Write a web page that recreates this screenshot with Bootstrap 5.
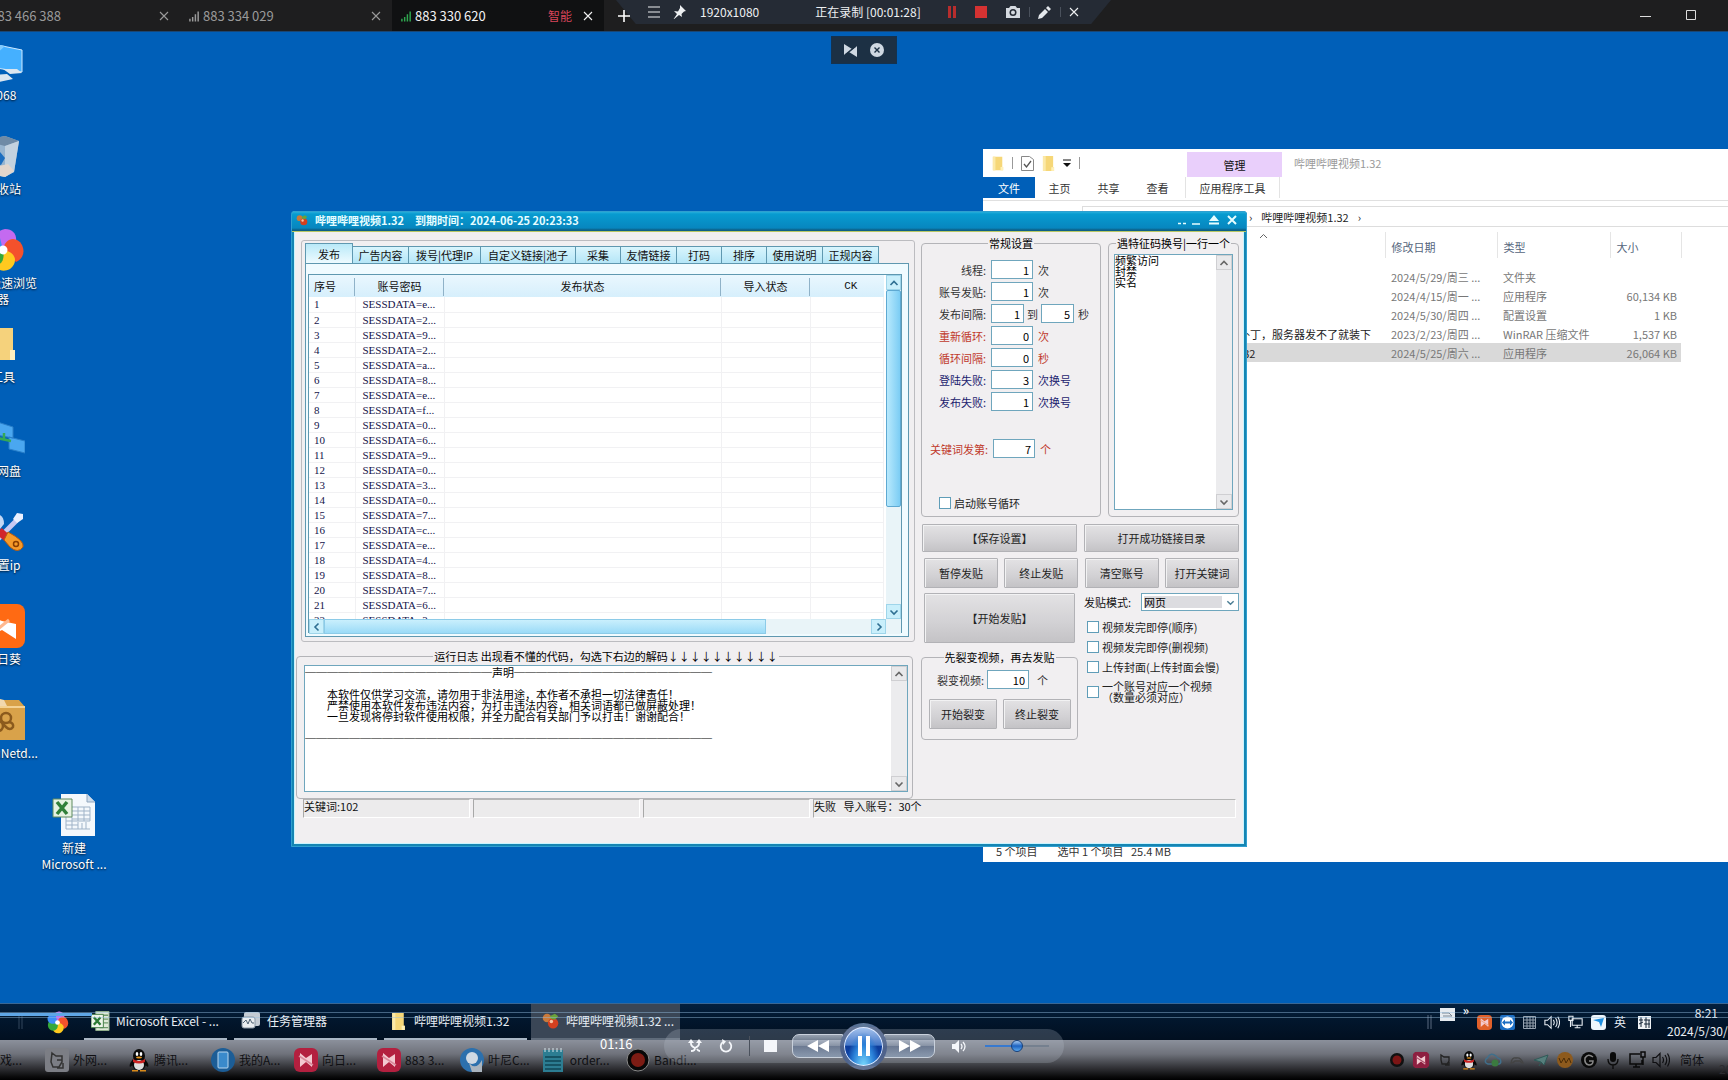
<!DOCTYPE html>
<html lang="zh-CN">
<head>
<meta charset="utf-8">
<meta name="viewport" content="width=device-width, initial-scale=1">
<title>远程桌面</title>
<link rel="stylesheet" href="https://cdn.jsdelivr.net/npm/bootstrap@5.3.0/dist/css/bootstrap.min.css">
<style>
:root{--ui:"Noto Sans CJK SC","Noto Sans",sans-serif;--line:#6fa6bd}
html,body{height:100%}
body{margin:0;background:#005fb8;font-family:var(--ui);font-size:11px;line-height:14px;color:#111;overflow:hidden}
svg{display:block;flex:none}
button,input,select,textarea{font-family:inherit;font-size:inherit}
.bare{background:none;border:0;padding:0;color:inherit;display:flex;align-items:center;justify-content:center}

/* remote session tabs */
.sessbar{height:32px;background:#1e1e1f;color:#9a9a9a;font-size:13px;flex:none;border-bottom:1px solid #1a4674}
.sess{width:212px;padding:0 11px 0 9px;gap:3px;white-space:nowrap}
.sess.first{width:180px;padding-left:0}
.sess.first .num{width:61px;direction:rtl;overflow:hidden;text-align:right}
.sess .num{flex:none}
.sess.on{background:#101112;color:#f2f2f2}
.smart{color:#d8455a;font-size:12px}
.recbar{left:616px;top:0;height:24px;width:495px;background:#252b35;clip-path:polygon(0 0,100% 0,96% 100%,4% 100%);color:#eef0f2;font-size:12px;padding:0 32px}
.recsep{width:1px;height:10px;background:#4a515c}
.minirec{left:831px;top:4px;width:66px;height:28px;background:#1c3044;border:1px solid #14324f;color:#cfd8e2}

/* desktop icons */
.dcol{left:-37px;top:8px;width:80px}
.dico{height:94px;text-align:center;color:#fff;font-size:12px;line-height:16px;text-shadow:0 1px 2px #012;white-space:nowrap}
.dico svg{height:44px;width:44px;margin:0 auto 3px}
.dico.solo{left:34px;top:761px;width:80px}

/* file explorer */
.explorer{left:983px;right:0;top:117px;height:713px;background:#fff;font-size:11px;overflow:hidden}
.qbar{height:28px;padding-left:9px}
.qsep{width:1px;height:12px;background:#999}
.mng{width:95px;height:25px;background:#e9cffb;margin-left:107px;margin-top:3px}
.etabs{height:24px;border-bottom:1px solid #e0e0e0}
.etabs a{color:#333;text-decoration:none;height:21px;display:flex;align-items:center;justify-content:center;width:49px}
.etabs a.file{background:#005fb8;color:#fff;width:52px}
.etabs a.tool{width:95px;margin-left:3px;border:1px solid #e3e3e3;border-width:0 1px}
.addr{height:21px;margin:5px 0 0 99px;border:1px solid #ddd;border-right:0;padding-left:166px;gap:9px;color:#222}
.flist{margin-top:5px;table-layout:fixed;width:698px;border-collapse:collapse;color:#777}
.flist th{font-weight:400;color:#54657c;height:26px;border-right:1px solid #e5e5e5;padding:4px 0 0 6px;vertical-align:middle}
.flist td{height:19px;padding:0 4px 0 6px;white-space:nowrap;overflow:hidden}
.flist tbody:before{content:"";display:block;height:9px}
.flist .nm{color:#222}
.flist .known{padding-left:185px}
.flist .pick td{background:#d9d9d9}

/* publishing tool window */
.tool-win{left:291px;top:179px;width:956px;background:#f1eff1;border:3px solid #1585b3;outline:1px solid #2f9fd0;outline-offset:-1px;border-top:0;border-radius:4px 4px 0 0;box-shadow:inset 0 0 0 1px #c8f4ff}
.tbar{height:21px;margin:0 -3px;padding:0 10px 2px 5px;background:linear-gradient(#37b7df 0,#079bd0 15%,#0786bf 85%,#0c5f86 95%);border-radius:4px 4px 0 0;border-bottom:1px solid #b8c765;color:#e6fdff;font-weight:700;gap:7px}
.client{padding:0 5px 0 2px}
.colL{padding-top:8px;min-width:0}
.colR{width:318px;padding-top:4px;flex:none}
.tabbox{margin:0 0 0 5px;height:402px;padding:3px 5px 4px 3px;border:1px solid #bcbcc0;border-radius:3px}
.ttabs{height:19px;align-items:flex-end}
.ttabs button{height:17px;border:1px solid #5f98b0;border-bottom:0;border-left:0;background:linear-gradient(#d9f5fd,#b5e6f7);padding:0;line-height:14px;color:#111;white-space:nowrap;border-radius:0}
.ttabs button.active{height:20px;width:48px;border-left:1px solid #5f98b0;background:linear-gradient(#b9e9f8,#eefbff)}
.w45{width:45px}.w56{width:56px}.w72{width:72px}.w96{width:95px}
.tpane{border:1px solid #5f98b0;background:#f0fbff;flex:1;padding:10px 6px 3px 2px;min-height:0}
.lview{border:1px solid #5f98b0;height:100%;display:grid;grid-template:1fr 15px/1fr 15px;background:#fff}
.lrows{overflow:hidden;min-height:0;height:344px}
.ltab{table-layout:fixed;width:575px;border-collapse:collapse}
.ltab th{height:22px;line-height:20px;background:linear-gradient(#eaf7fe,#d6effc);font-weight:400;text-align:center;padding:0;color:#111;position:relative;vertical-align:middle}
.ltab th:first-child{text-align:left;padding-left:5px}
.ltab th:not(:last-child):after{content:"";position:absolute;right:0;top:3px;bottom:1px;width:1px;background:#8fb2c8}
.ltab td{height:15px;line-height:14px;padding:0 0 0 7px;border:1px solid #f1f1f3;border-width:0 1px 1px 0;font-family:"Liberation Serif",serif;color:#14144a;white-space:nowrap}
.ltab td:first-child{padding-left:5px}
.ckh{font-family:"Liberation Mono",monospace;font-size:11px}
.vbar{background:#e9f4f8;display:flex;flex-direction:column}
.hbar{background:#e9f4f8;display:flex}
.arr{width:15px;height:15px;background:#c9effb;border:1px solid #9fd5ea;color:#2f6f92}
.vthumb{height:217px;background:linear-gradient(90deg,#b8e9fd,#7ccdf4);border:1px solid #5ea9d2;border-radius:2px}
.hthumb{width:442px;background:linear-gradient(#c9effd,#9bdbf7);border:1px solid #8ccbe8}
.fs{border:1px solid #b4b4b8;border-radius:4px;position:relative}
.fs>legend{float:none;width:auto;font-size:11px;line-height:14px;height:14px;margin:0 auto;padding:0 1px;color:#000;white-space:nowrap}
.logfs{height:150px;margin-top:7px;width:617px;padding:2px 4px 5px 7px}
.memo{border:1px solid var(--line);background:#fff;display:flex}
.memo textarea{border:0;resize:none;overflow:hidden;flex:1;min-width:0;background:#fff;padding:0;line-height:11px;font-size:11px;color:#000;outline:0;white-space:pre}
.logmemo{height:127px}.logmemo textarea{padding-top:1px}
.sbar{width:16px;background:#ececee;display:flex;flex-direction:column;justify-content:space-between}
.sbar .arr{background:#e9e9eb;border-color:#cfcfd2;color:#666;width:16px}
.opt{height:281px;width:180px}
.feat{height:281px;width:131px;padding:1px 5px 0 5px}
.feat .memo{height:256px;margin-top:3px}
.optrows{padding-top:10px;gap:3px}
.orow{height:19px;align-items:center;white-space:nowrap;color:#333}
.orow>label{width:64px;text-align:right;margin-right:5px}
.orow>label.kw{width:66px}
.orow>span{margin-left:5px}
.orow input{width:42px;height:19px;border:1px solid var(--line);background:#fff;text-align:right;padding:0 3px 0 0;color:#000;outline:0}
.orow input.sh{width:33px}
.orow>.to{margin:0 3px}
.tr-red,.orow.tr-red{color:#c0392b}
.tr-navy,.orow.tr-navy{color:#1c1c6e}
.tick{display:flex;align-items:center;gap:3px;line-height:11px;white-space:nowrap;color:#222}
.tick input{appearance:none;width:12px;height:12px;margin:0;border:1px solid #5f9db8;background:#fff;flex:none}
.tbtn{--bs-btn-font-size:11px;--bs-btn-line-height:14px;--bs-btn-padding-x:0;--bs-btn-padding-y:0;--bs-btn-border-radius:1px;--bs-btn-color:#222;background:linear-gradient(#e3e2e4,#d2d1d4 60%,#c4c3c6);border:1px solid #b2b2b6;box-shadow:inset 1px 1px #f2f2f3;white-space:nowrap}
.h28{height:28px}.h30{height:30px}.h50{height:50px}
.bw{width:74px}
.colA{width:157px}
.splitfs{height:90px;margin-top:7px}
.splitfs .orow{height:19px;margin-top:6px}
.splitfs .orow>label{width:62px;margin-right:3px}
.mode select{appearance:none;width:98px;height:18px;border:1px solid var(--line);background:#fff linear-gradient(#dcdce0,#dcdce0) 2px 2px/78px 12px no-repeat;padding:0 0 0 2px;line-height:14px;border-radius:0;color:#000}
.mode .chev{right:4px;top:5px;pointer-events:none;color:#4d7f95}
.stat{height:19px;margin:0 3px 26px 7px;gap:3px;color:#111;line-height:12px}
.stat>div{border:1px solid #fff;border-top-color:#b5b5b5;border-left-color:#a8a8a8;background:#ecebec;width:167px;white-space:pre}
.stat>div:last-child{flex:1;width:auto}

/* remote taskbar */
.rtask{height:37px;background:linear-gradient(#03203f,#02172e 40%,#010f20);border-top:1px solid #3a6794;color:#e9eef4;font-size:12px;flex:none}
.task{width:143px;margin-right:7px;gap:6px;padding-left:7px;border-bottom:2px solid #a9b6c4;white-space:nowrap;height:100%}
.task.on{width:149px;margin:0 0 0 -3px;background:#3a4656;border-bottom-color:#5f6b7a;padding-left:10px;gap:6px}
.rtray{gap:8px}
.clock{width:61px;line-height:18px;font-size:12px;white-space:nowrap}
.clock span{padding-right:10px}
/* local taskbar */
.ltask{height:40px;background:linear-gradient(#8b909b 0,#6f727b 35%,#393a3f 65%,#0a0a0b 92%,#000);color:#0f0f12;font-size:12px;flex:none;overflow:hidden}
.lt{width:83px;gap:4px;white-space:nowrap;flex:none}
.ltray{gap:6px}
.ltray svg{width:18px;height:20px}

/* player overlay */
.seek{left:0;right:0;bottom:62px;height:6px;border:1px solid rgba(150,190,225,.45);border-width:1px 0;pointer-events:none}
.seek i{display:block;width:92px;height:3px;background:#5fa6e6}
.ptime{left:600px;bottom:27px;color:#fff;font-size:13px;line-height:18px}
.player{left:664px;bottom:17px;width:400px;height:34px;border-radius:17px;background:rgba(190,195,210,.24);color:#f4f6fa}
.player .skip{width:51px;height:24px;background:linear-gradient(rgba(220,228,240,.6),rgba(130,150,180,.4) 48%,rgba(80,100,135,.55) 50%,rgba(150,175,205,.55));border:1px solid #c9d1dc;color:#fff}
.player .rew{border-radius:7px 0 0 7px;margin-left:15px}
.player .fwd{border-radius:0 7px 7px 0}
.player .play{width:47px;height:47px;border-radius:50%;border:4px solid rgba(90,105,135,.85);background:radial-gradient(ellipse at 50% 105%,#7fe0ff 0,#2a80d8 40%,transparent 62%),linear-gradient(#a9c6ef 0,#4678c8 46%,#0d3c9b 50%,#0f4cb0);box-shadow:inset 0 0 0 1px #dfeaff;margin:0 -3px;z-index:1;color:#fff;flex:none}
.vol{appearance:none;width:64px;height:14px;background:linear-gradient(90deg,#3779cf 50%,#75808f 50%) center/100% 2px no-repeat;margin:0 0 0 18px}
.vol::-webkit-slider-thumb{appearance:none;width:12px;height:12px;border-radius:50%;background:linear-gradient(#a9cdf4,#1c62c0 50%,#5aa8ee);border:1px solid #16407c}
</style>
</head>
<body class="d-flex flex-column vh-100">

<svg width="0" height="0" class="position-absolute" aria-hidden="true">
<defs>
<symbol id="x" viewBox="0 0 10 10"><path d="M1 1l8 8M9 1l-8 8" stroke="currentColor" stroke-width="1.1" fill="none"/></symbol>
<symbol id="sig" viewBox="0 0 12 12"><path d="M1 9v3M4 7v5M7 4v8M10 1v11" stroke="currentColor" stroke-width="1.6" fill="none"/></symbol>
<symbol id="up" viewBox="0 0 10 10"><path d="M1.500 7L5 3.500 8.500 7" fill="none" stroke="currentColor" stroke-width="1.600"/></symbol>
<symbol id="dn" viewBox="0 0 10 10"><path d="M1.500 3.500L5 7l3.500-3.500" fill="none" stroke="currentColor" stroke-width="1.600"/></symbol>
<symbol id="lf" viewBox="0 0 10 10"><path d="M6.500 1.500L3 5l3.500 3.500" fill="none" stroke="currentColor" stroke-width="1.600"/></symbol>
<symbol id="rt" viewBox="0 0 10 10"><path d="M3.500 1.500L7 5 3.500 8.500" fill="none" stroke="currentColor" stroke-width="1.600"/></symbol>
<symbol id="folder" viewBox="0 0 14 18"><path d="M1 1h11v12h1v4H1z" fill="#f6d778"/><path d="M1 1h3v16H1z" fill="#fbe9a8"/><path d="M10 13h3v4h-3z" fill="#fff1b8"/></symbol>
<symbol id="flower" viewBox="0 0 44 44"><path d="M22 22C10 16 12 3 24 1c8 0 12 6 11 12z" fill="#c46af0"/><path d="M22 22c2-13 14-14 19-5 4 9-1 15-6 17z" fill="#f4512c"/><path d="M22 22c14 2 15 13 7 19-8 4-14 0-16-5z" fill="#ffc91f"/><path d="M22 22c3 12-5 19-14 14-6-5-5-12-2-16z" fill="#35a93a"/><path d="M22 22C12 28 2 23 3 13 6 6 13 5 18 6z" fill="#3d8df5"/><circle cx="22" cy="22" r="4.500" fill="#fff"/></symbol>
<symbol id="sun" viewBox="0 0 24 24"><rect width="24" height="24" rx="6" fill="var(--c,#b3203f)"/><path d="M6 5l6 5 6-4v13l-6-5-6 5z" fill="#f3c9d0"/><path d="M5 8l14 9" stroke="var(--s,#d98a9b)" stroke-width="1.500"/></symbol>
<symbol id="penguin" viewBox="0 0 22 24"><ellipse cx="11" cy="8" rx="6" ry="7" fill="#0a0a0a"/><path d="M5 11c-3 4-4 6-3 8l3-2zM17 11c3 4 4 6 3 8l-3-2z" fill="#0a0a0a"/><ellipse cx="11" cy="16" rx="7" ry="6.500" fill="#0a0a0a"/><ellipse cx="11" cy="17" rx="5" ry="5" fill="#ddd"/><path d="M5 11q6 4 12 0v3q-6 3-12 0z" fill="#c22"/><ellipse cx="9" cy="6" rx="1.300" ry="2" fill="#fff"/><ellipse cx="13" cy="6" rx="1.300" ry="2" fill="#fff"/><ellipse cx="11" cy="9.500" rx="3" ry="1" fill="#e9961c"/><path d="M4 22h6v1.500H4zM12 22h6v1.500h-6z" fill="#d98a1a"/></symbol>
<symbol id="spk" viewBox="0 0 18 16"><path d="M1 5.500h3l4-4v13l-4-4H1z" fill="none" stroke="currentColor" stroke-width="1.200"/><path d="M10.500 5q2 3 0 6M13 3q3.500 5 0 10M15.500 1.500q4 6.500 0 13" fill="none" stroke="currentColor" stroke-width="1.200"/></symbol>
<symbol id="net" viewBox="0 0 18 16"><path d="M5 4h12v8H5zM8 15h7M11 12v3M1 1h5v5H1zM3 6v8" fill="none" stroke="currentColor" stroke-width="1.300"/></symbol>
<symbol id="berry" viewBox="0 0 20 22"><circle cx="6" cy="7" r="5" fill="#c9793a"/><circle cx="13" cy="13" r="6" fill="#d4401f"/><path d="M9 5l6-3 4 3-4 4-4-1z" fill="#6ba23a"/><circle cx="11" cy="11" r="2" fill="#f6c3a3"/></symbol>
<symbol id="xls" viewBox="0 0 44 44"><path d="M9 1h26l8 8v34H9z" fill="#f4f8fc"/><path d="M35 1v8h8" fill="#cddbea" stroke="#8fa5bd"/><path d="M14 28h24M14 32h12M14 36h24M20 14h18M20 18h18M20 22h18M20 26h18M26 14v14M32 14v14M38 14v14M14 24v12M20 24v12M26 29v7M30 30v6M34 29v7" stroke="#9fb3c8" fill="none"/><path d="M1 6h19v18H1z" fill="#e6f2e2" stroke="#5e8a5e"/><path d="M5 9l10 12M15 9L5 21" stroke="#31803a" stroke-width="3.500"/></symbol>
<symbol id="xl" viewBox="0 0 20 20"><path d="M5 0h14v20H5z" fill="#dfe9d8" stroke="#8fae8a"/><path d="M13 4h5M13 8h5M13 12h5M9 17h9" stroke="#6d9a6b" stroke-width="1.500"/><path d="M0 3h13v14H0z" fill="#eef5ea" stroke="#3e7a42"/><path d="M3 6l7 8M10 6l-7 8" stroke="#2c7a35" stroke-width="2.500"/></symbol>
</defs>
</svg>

<header class="sessbar d-flex position-relative">
  <div class="sess first d-flex align-items-center"><span class="num"><bdi>883 466 388</bdi></span><button class="bare ms-auto" aria-label="关闭"><svg width="10" height="10"><use href="#x"/></svg></button></div>
  <div class="sess d-flex align-items-center"><svg width="11" height="12"><use href="#sig"/></svg><span class="num">883 334 029</span><button class="bare ms-auto" aria-label="关闭"><svg width="10" height="10"><use href="#x"/></svg></button></div>
  <div class="sess on d-flex align-items-center"><svg width="11" height="12" color="#2fa84f"><use href="#sig"/></svg><span class="num">883 330 620</span><span class="smart ms-auto me-2">智能</span><button class="bare" aria-label="关闭"><svg width="10" height="10"><use href="#x"/></svg></button></div>
  <button class="bare position-relative z-1 text-white" style="padding-left:14px" aria-label="新建"><svg width="12" height="12"><path d="M6 0v12M0 6h12" stroke="currentColor" stroke-width="1.600"/></svg></button>
  <div class="recbar position-absolute d-flex align-items-center">
    <svg width="12" height="12"><path d="M0 1h12M0 6h12M0 11h12" stroke="currentColor"/></svg>
    <svg width="14" height="14" style="margin:0 10px 0 12px"><path d="M8 0l6 6-2 .500-2.500 2.500.500 3-3-2-6 5 4-6-3-3 4 .500L8 3z" fill="currentColor"/></svg>
    <span class="ms-1">1920x1080</span>
    <span class="ms-5 ps-2">正在录制 [00:01:28]</span>
    <div class="d-flex align-items-center ms-auto gap-2">
      <svg width="10" height="12"><path d="M1 0h3v12H1zM6 0h3v12H6z" fill="#b72d2d"/></svg>
      <svg width="12" height="12" style="margin:0 10px"><path d="M0 0h12v12H0z" fill="#d53232"/></svg>
      <svg width="16" height="14"><path d="M1 3h3l1.500-2h5L12 3h3v10H1z" fill="#d5dae0"/><circle cx="8" cy="7.500" r="3.500" fill="#252b35"/><circle cx="8" cy="7.500" r="2" fill="#d5dae0"/></svg>
      <i class="recsep ms-n1"></i>
      <svg width="14" height="13"><path d="M0 13l1-4 6-6 3 3-6 6zM8 2l2-2 3 3-2 2z" fill="#e4e8ec"/></svg>
      <i class="recsep"></i>
      <button class="bare" aria-label="关闭录制"><svg width="10" height="10"><use href="#x"/></svg></button>
    </div>
  </div>
  <div class="d-flex align-items-center ms-auto text-white" style="gap:35px;padding-right:31px">
    <button class="bare" aria-label="最小化"><svg width="11" height="11"><path d="M0 6.500h11" stroke="#ddd"/></svg></button>
    <button class="bare" aria-label="最大化"><svg width="11" height="11"><path d="M.5.5h9v9h-9z" stroke="#ddd" fill="none"/></svg></button>
  </div>
</header>

<main class="flex-grow-1 position-relative overflow-hidden">
  <div class="minirec position-absolute d-flex align-items-center justify-content-center" style="gap:13px">
    <svg width="13" height="13"><path d="M0 0l8 5-8 6zM13 2v11L5 8z" fill="currentColor"/><path d="M1 11l11-9" stroke="#1c3044" stroke-width="1.500"/></svg>
    <svg width="14" height="14"><circle cx="7" cy="7" r="7" fill="currentColor"/><path d="M4.500 4.500l5 5M9.500 4.500l-5 5" stroke="#1c3044" stroke-width="1.400"/></svg>
  </div>

  <div class="dcol position-absolute">
    <div class="dico"><svg viewBox="0 0 44 44"><path d="M2 2l39 8v22L2 26z" fill="#45b0ff" stroke="#cfeaff"/><path d="M2 2l22 4L2 26z" fill="#7fcbff"/><path d="M22 29l14 0 5 4-12 1zM14 35l12-1 6 5-14 3z" fill="#dbe6f0"/></svg>1068</div>
    <div class="dico"><svg viewBox="0 0 44 44"><path d="M2 6l22-4 14 5-5 31-10 5-20-5z" fill="#a9bfd2" opacity=".9"/><path d="M2 6l22 6 14-5-14-5z" fill="#6f8ba6"/><path d="M24 12l14-5-5 31-9 5z" fill="#c3d2df"/><path d="M8 34l19-4 6 7-9 6-18-4z" fill="#e3d6cc"/><path d="M12 22l7-4 5 6-4 7-8-2z" fill="#1d6fc0"/></svg>回收站</div>
    <div class="dico"><svg><use href="#flower"/></svg>360极速浏览<br>器</div>
    <div class="dico"><svg viewBox="0 0 44 44"><path d="M6 6h26v22h2v10H6z" fill="#f5d27c"/><path d="M6 6h12v32H6z" fill="#fce4a4"/><path d="M29 28h5v10h-5z" fill="#fff0c0"/></svg>工具</div>
    <div class="dico"><svg viewBox="0 0 44 44"><path d="M10 4l22 7v11L10 18zM28 21l16 4v12l-16-4zM0 24l12 3v12L0 35z" fill="#4aa7f0" stroke="#2a7fc8"/><path d="M23 17v7M16 22l14 3" stroke="#35a856" stroke-width="2.500"/></svg>联网盘</div>
    <div class="dico"><svg viewBox="0 0 44 44"><path d="M14 4q9 0 9 10l-4 5-12-4z" fill="#c3d7f4"/><path d="M38 8L14 32" stroke="#c8c9f2" stroke-width="5"/><path d="M36 3l6 1v5l-6 4-4-4z" fill="#eaf0ff"/><path d="M18 21l8 7" stroke="#d2242b" stroke-width="8"/><path d="M27 22q17 9 15 15-5 7-13 0l-6-7z" fill="#f59a2a" stroke="#b45a10"/><circle cx="35" cy="34" r="2.500" fill="none" stroke="#8a3d00" stroke-width="1.500"/></svg>设置ip</div>
    <div class="dico"><svg viewBox="0 0 44 44"><rect width="44" height="44" rx="8" fill="#ff6a13"/><path d="M7 12l14 5 14 3v15l-14-9-14 7z" fill="#fff"/><path d="M7 33l21-17" stroke="#ffb88f" stroke-width="3"/></svg>向日葵</div>
    <div class="dico"><svg viewBox="0 0 44 44"><path d="M2 9L8 2h30l6 7v33H2z" fill="#d9a24a"/><path d="M2 9h42" stroke="#f4d294" stroke-width="2"/><path d="M15 0l8 2 3 6H14z" fill="#f2d8ae"/><circle cx="25" cy="20" r="5" fill="none" stroke="#8b5a1d" stroke-width="2.500"/><circle cx="17" cy="28" r="5" fill="none" stroke="#8b5a1d" stroke-width="2.500"/><path d="M28 24q5 1 4 5-3 4-7 0l-3-3" fill="none" stroke="#8b5a1d" stroke-width="2.500"/></svg>BaiduNetd...</div>
  </div>
  <div class="dico solo position-absolute"><svg><use href="#xls"/></svg>新建<br>Microsoft ...</div>

  <section class="explorer position-absolute">
    <div class="qbar d-flex align-items-center">
      <svg width="12" height="17"><use href="#folder"/></svg><i class="qsep ms-2 me-2"></i>
      <svg width="13" height="15" class="me-2"><path d="M.5.5h8l4 3v11h-12z" fill="#fff" stroke="#888"/><path d="M3 8l2.500 3L10 5" fill="none" stroke="#555" stroke-width="1.300"/></svg>
      <svg width="13" height="17" class="me-2"><use href="#folder"/></svg>
      <svg width="8" height="8" class="me-2"><path d="M0 1h8" stroke="#111"/><path d="M0 4h8L4 8z" fill="#111"/></svg><i class="qsep"></i>
      <div class="mng d-flex align-items-center justify-content-center">管理</div>
      <span class="ms-2 ps-1" style="color:#999">哔哩哔哩视频1.32</span>
    </div>
    <nav class="etabs d-flex"><a href="#" class="file">文件</a><a href="#">主页</a><a href="#">共享</a><a href="#">查看</a><a href="#" class="tool flex-shrink-0">应用程序工具</a></nav>
    <div class="addr d-flex align-items-center"><span>›</span><span>哔哩哔哩视频1.32</span><span>›</span></div>
    <table class="flist">
      <colgroup><col style="width:402px"><col style="width:112px"><col style="width:113px"><col style="width:71px"></colgroup>
      <thead><tr><th aria-label="名称" class="align-top pt-0"><svg width="9" height="9" style="margin-left:270px"><path d="M1 6l3.500-3.500L8 6" fill="none" stroke="#666"/></svg></th><th>修改日期</th><th>类型</th><th>大小</th></tr></thead>
      <tbody>
        <tr><td></td><td>2024/5/29/周三 ...</td><td>文件夹</td><td></td></tr>
        <tr><td></td><td>2024/4/15/周一 ...</td><td>应用程序</td><td class="text-end">60,134 KB</td></tr>
        <tr><td></td><td>2024/5/30/周四 ...</td><td>配置设置</td><td class="text-end">1 KB</td></tr>
        <tr><td class="nm text-end" style="padding-right:14px">补丁，服务器发不了就装下</td><td>2023/2/23/周四 ...</td><td>WinRAR 压缩文件</td><td class="text-end">1,537 KB</td></tr>
        <tr class="pick"><td class="nm known">哔哩哔哩视频1.32</td><td>2024/5/25/周六 ...</td><td>应用程序</td><td class="text-end">26,064 KB</td></tr>
      </tbody>
    </table>
    <div class="position-absolute bottom-0 start-0 d-flex pb-1" style="padding-left:13px;gap:20px;color:#333"><span>5 个项目</span><span>选中 1 个项目&nbsp;&nbsp; 25.4 MB</span></div>
  </section>

  <section class="tool-win position-absolute">
    <div class="tbar d-flex align-items-center">
      <svg width="12" height="13"><use href="#berry"/></svg>
      <span>哔哩哔哩视频1.32</span><span class="ms-1">到期时间：2024-06-25 20:23:33</span>
      <span class="ms-auto d-flex gap-1 align-items-center">
        <button class="bare" aria-label="托盘"><svg width="10" height="10"><path d="M1 8.500h3M6 8.500h3" stroke="currentColor" stroke-width="1.500"/></svg></button>
        <button class="bare" aria-label="最小化"><svg width="10" height="10"><path d="M1 9h8" stroke="currentColor" stroke-width="1.500"/></svg></button>
        <button class="bare ms-1" aria-label="还原"><svg width="10" height="10"><path d="M5 0l5 6H0zM0 7.500h10V9.500H0z" fill="currentColor"/></svg></button>
        <button class="bare ms-1" aria-label="关闭"><svg width="10" height="10" stroke-width="2"><path d="M1 1l8 8M9 1l-8 8" stroke="currentColor"/></svg></button>
      </span>
    </div>
    <div class="client">
      <div class="d-flex" style="gap:6px">
        <div class="colL flex-grow-1">
          <div class="tabbox d-flex flex-column">
            <div class="ttabs d-flex" role="tablist"><button class="active">发布</button><button class="w56">广告内容</button><button class="w72">拨号|代理IP</button><button class="w96">自定义链接|池子</button><button class="w45">采集</button><button class="w56">友情链接</button><button class="w45">打码</button><button class="w45">排序</button><button class="w56">使用说明</button><button class="w56">正规内容</button></div>
            <div class="tpane"><div class="lview">
              <div class="lrows"><table class="ltab"><colgroup><col style="width:46px"><col style="width:89px"><col style="width:277px"><col style="width:89px"><col></colgroup>
                <thead><tr><th>序号</th><th>账号密码</th><th>发布状态</th><th>导入状态</th><th class="ckh ps-2">CK</th></tr></thead><tbody id="accs"></tbody></table></div>
              <div class="vbar"><button class="bare arr"><svg width="10" height="10"><use href="#up"/></svg></button><div class="vthumb"></div><button class="bare arr mt-auto"><svg width="10" height="10"><use href="#dn"/></svg></button></div>
              <div class="hbar"><button class="bare arr"><svg width="10" height="10"><use href="#lf"/></svg></button><div class="hthumb"></div><button class="bare arr ms-auto"><svg width="10" height="10"><use href="#rt"/></svg></button></div>
              <div class="hbar"></div>
            </div></div>
          </div>
          <fieldset class="fs logfs"><legend>运行日志 出现看不懂的代码，勾选下右边的解码↓↓↓↓↓↓↓↓↓↓</legend>
            <div class="memo logmemo"><textarea aria-label="运行日志" readonly>─────────────────声明──────────────────

　　本软件仅供学习交流，请勿用于非法用途，本作者不承担一切法律责任！
　　严禁使用本软件发布违法内容，为打击违法内容，相关词语都已做屏蔽处理！
　　一旦发现将停封软件使用权限，并全力配合有关部门予以打击！谢谢配合！

─────────────────────────────────────</textarea>
            <div class="sbar"><button class="bare arr"><svg width="10" height="10"><use href="#up"/></svg></button><button class="bare arr"><svg width="10" height="10"><use href="#dn"/></svg></button></div></div>
          </fieldset>
        </div>
        <div class="colR">
          <div class="d-flex justify-content-between">
            <fieldset class="fs opt"><legend>常规设置</legend>
              <div class="optrows d-flex flex-column">
                <div class="orow d-flex"><label for="a1">线程:</label><input id="a1" value="1"><span>次</span></div>
                <div class="orow d-flex"><label for="a2">账号发贴:</label><input id="a2" value="1"><span>次</span></div>
                <div class="orow d-flex"><label for="a3">发布间隔:</label><input class="sh" id="a3" value="1"><label class="to w-auto" for="a4">到</label><input class="sh" id="a4" value="5"><span class="ms-1">秒</span></div>
                <div class="orow d-flex tr-red"><label for="a5">重新循环:</label><input id="a5" value="0"><span>次</span></div>
                <div class="orow d-flex tr-red"><label for="a6">循环间隔:</label><input id="a6" value="0"><span>秒</span></div>
                <div class="orow d-flex tr-navy"><label for="a7">登陆失败:</label><input id="a7" value="3"><span>次换号</span></div>
                <div class="orow d-flex tr-navy"><label for="a8">发布失败:</label><input id="a8" value="1"><span>次换号</span></div>
              </div>
              <div class="orow d-flex tr-red" style="margin-top:28px"><label class="kw" for="a9">关键词发第:</label><input id="a9" value="7"><span>个</span></div>
              <label class="tick" style="margin:39px 0 0 17px"><input type="checkbox">启动账号循环</label>
            </fieldset>
            <fieldset class="fs feat"><legend>遇特征码换号|一行一个</legend>
              <div class="memo"><textarea aria-label="遇特征码换号">频繁访问
封禁
实名</textarea><div class="sbar"><button class="bare arr"><svg width="10" height="10"><use href="#up"/></svg></button><button class="bare arr"><svg width="10" height="10"><use href="#dn"/></svg></button></div></div>
            </fieldset>
          </div>
          <div class="d-flex justify-content-between" style="margin:7px 0 6px 1px"><button class="btn tbtn h28" style="width:155px">【保存设置】</button><button class="btn tbtn h28" style="width:155px">打开成功链接目录</button></div>
          <div class="d-flex justify-content-between h30" style="margin-left:3px"><button class="btn tbtn bw">暂停发贴</button><button class="btn tbtn bw">终止发贴</button><button class="btn tbtn bw">清空账号</button><button class="btn tbtn bw">打开关键词</button></div>
          <div class="d-flex" style="margin-top:5px;gap:6px">
            <div class="colA">
              <button class="btn tbtn h50 d-block" style="width:151px;margin-left:3px">【开始发贴】</button>
              <fieldset class="fs splitfs"><legend>先裂变视频，再去发贴</legend>
                <div class="orow d-flex"><label for="b1">裂变视频:</label><input id="b1" value="10"><span class="ms-2">个</span></div>
                <div class="d-flex h30" style="gap:6px;padding-left:7px;margin-top:10px"><button class="btn tbtn" style="width:68px">开始裂变</button><button class="btn tbtn" style="width:68px">终止裂变</button></div>
              </fieldset>
            </div>
            <div class="flex-grow-1">
              <div class="mode d-flex align-items-center justify-content-between position-relative"><label for="md">发贴模式:</label><select id="md"><option>网页</option></select><svg class="chev position-absolute" width="9" height="9"><use href="#dn"/></svg></div>
              <div class="d-flex flex-column" style="gap:8px;padding:10px 0 0 3px">
                <label class="tick"><input type="checkbox">视频发完即停(顺序)</label>
                <label class="tick"><input type="checkbox">视频发完即停(删视频)</label>
                <label class="tick"><input type="checkbox">上传封面(上传封面会慢)</label>
                <label class="tick"><input type="checkbox"><span>一个账号对应一个视频<br>（数量必须对应）</span></label>
              </div>
            </div>
          </div>
        </div>
      </div>
      <div class="stat d-flex"><div>关键词:102</div><div></div><div></div><div>失败   导入账号：30个</div></div>
    </div>
  </section>
</main>

<footer class="rtask d-flex align-items-center">
  <svg width="6" height="14" style="margin-left:18px"><path d="M1 0v14M4 0v14" stroke="#33465c"/></svg>
  <svg width="23" height="23" style="margin:0 15px 0 22px"><use href="#flower"/></svg>
  <div class="task d-flex align-items-center"><svg width="19" height="20"><use href="#xl"/></svg>Microsoft Excel - ...</div>
  <div class="task d-flex align-items-center"><svg width="20" height="20"><rect x="3" y="1" width="16" height="14" rx="2" fill="#c4ccd4"/><rect x="1" y="6" width="13" height="11" rx="2" fill="#e9edf0" stroke="#8896a3"/><path d="M2 12l3-3 2 4 2-5 2 4h2" stroke="#4d6172" fill="none"/></svg>任务管理器</div>
  <div class="task d-flex align-items-center" style="gap:8px"><svg width="15" height="19"><use href="#folder"/></svg>哔哩哔哩视频1.32</div>
  <div class="task on d-flex align-items-center"><svg width="19" height="19"><use href="#berry"/></svg>哔哩哔哩视频1.32 ...</div>
  <div class="rtray d-flex align-items-center ms-auto">
    <svg width="5" height="14"><path d="M1 0v14M4 0v14" stroke="#5a6b80"/></svg>
    <svg width="15" height="13" class="mb-3"><rect width="15" height="13" fill="#e6ebf0"/><path d="M2 5h7l3 3M3 8h9" stroke="#7b8794" fill="none"/></svg>
    <span class="mb-4 text-white fw-bold">»</span>
    <svg width="15" height="15" style="--c:#e0602a;--s:#f0a080"><use href="#sun"/></svg>
    <svg width="15" height="15"><rect width="15" height="15" rx="2" fill="#1d6fc4"/><circle cx="7.500" cy="7.500" r="6" fill="#fff"/><path d="M2 7.500l3-3v2h5v-2l3 3-3 3v-2H5v2z" fill="#1d6fc4"/></svg>
    <svg width="13" height="13"><path d="M.5.5h12v12H.5zM4 1v11M7 1v11M10 1v11M1 4h11M1 7h11M1 10h11" stroke="#97a3b0" fill="none"/></svg>
    <svg width="16" height="15"><use href="#spk"/></svg>
    <svg width="15" height="14"><use href="#net"/></svg>
    <svg width="15" height="15"><rect width="15" height="15" rx="3" fill="#eef6fc"/><path d="M2 5l11-2-3 9-2-5z" fill="#1f8fe0"/></svg>
    <span>英</span>
    <svg width="13" height="13" class="ms-1 me-2"><rect width="13" height="13" fill="#eef1f4"/><path d="M1 4h4M3 1v10M1 8l4-2M6 4h6M6 8h6M8 1v11M11 4v8" stroke="#142436" fill="none"/></svg>
    <div class="clock"><span class="d-block text-end">8:21</span>2024/5/30/</div>
  </div>
</footer>

<div class="ltask d-flex align-items-center">
  <span style="width:45px;white-space:nowrap">戏...</span>
  <div class="lt d-flex align-items-center"><svg width="24" height="24"><rect width="24" height="24" rx="3" fill="#7c7e85"/><path d="M7 5l4 3h6v6l-3 5H8l-2-5zM12 12h5M18 15v5h-6" fill="none" stroke="#333" stroke-width="1.500"/></svg>外网...</div>
  <div class="lt d-flex align-items-center"><svg width="22" height="24"><use href="#penguin"/></svg>腾讯...</div>
  <div class="lt d-flex align-items-center"><svg width="24" height="24"><circle cx="12" cy="12" r="12" fill="#1c5d96"/><rect x="7" y="4" width="10" height="16" rx="1" fill="#3a8acb" stroke="#b9d7ee"/></svg>我的A...</div>
  <div class="lt d-flex align-items-center"><svg width="24" height="24"><use href="#sun"/></svg>向日...</div>
  <div class="lt d-flex align-items-center"><svg width="24" height="24"><use href="#sun"/></svg>883 3...</div>
  <div class="lt d-flex align-items-center"><svg width="24" height="24"><circle cx="12" cy="12" r="12" fill="#2c70ad"/><circle cx="12" cy="10" r="6" fill="#cfd9e3"/><path d="M9 15q7 8 13-3v12H12z" fill="#aab4be"/></svg>叶尼C...</div>
  <div class="lt d-flex align-items-center"><svg width="20" height="24"><rect y="2" width="20" height="22" fill="#2c7d92"/><path d="M2 0v4M6 0v4M10 0v4M14 0v4M18 0v4" stroke="#d5e5ea"/><path d="M2 9h16M2 13h16M2 17h16M2 21h16" stroke="#0f4656" stroke-width="1.500"/></svg>&nbsp;order...</div>
  <div class="lt d-flex align-items-center"><svg width="24" height="24"><circle cx="12" cy="12" r="11" fill="#080808" stroke="#888"/><circle cx="12" cy="12" r="7" fill="#7d1c14"/></svg>Bandi...</div>
  <div class="ltray d-flex align-items-center ms-auto">
    <svg viewBox="0 0 18 20"><circle cx="9" cy="10" r="7" fill="#111"/><circle cx="9" cy="10" r="4.500" fill="#7c1515"/></svg>
    <svg viewBox="-1 -1 26 26" style="--c:#8d1f40;--s:#a8506a"><use href="#sun" width="24" height="24"/></svg>
    <svg viewBox="0 0 18 20"><path d="M5 5l3 2h5v4l-2 3H6l-1-4zM13 12v3H9" fill="none" stroke="#222" stroke-width="1.300"/></svg>
    <svg><use href="#penguin"/></svg>
    <svg viewBox="0 0 18 20"><path d="M4 14q-4-1-2-5 2-1 2-2 3-5 8-1 1 2 4 3 2 4-1 5z" fill="none" stroke="#416f8b" stroke-width="1.500"/><circle cx="11" cy="13" r="3.500" fill="#3b7a3f"/></svg>
    <svg viewBox="0 0 18 20"><path d="M3 13q1-6 5-5 5-1 7 5-2 0-3-2H7q-2 2-4 2z" fill="none" stroke="#444" stroke-width="1.300"/></svg>
    <svg viewBox="0 0 18 20"><path d="M2 10l14-5-4 10-3-3zM9 12l-2 4" fill="#567e7c" stroke="#2f5a58"/></svg>
    <svg viewBox="0 0 18 20"><circle cx="9" cy="10" r="8" fill="#8d5a1d"/><path d="M3 8l2 5 3-5 2 5 3-5 2 5" fill="none" stroke="#4a2c08"/></svg>
    <svg viewBox="0 0 18 20"><circle cx="9" cy="10" r="8" fill="#0a0a0a"/><path d="M13 7q-5-4-8 1-1 6 4 7 4 0 4-4H9" fill="none" stroke="#888" stroke-width="1.500"/></svg>
    <svg viewBox="0 0 18 20"><rect x="6" y="2" width="6" height="10" rx="3" fill="#0a0a0a"/><path d="M4 9q0 6 5 6t5-6M9 15v4" fill="none" stroke="#0a0a0a" stroke-width="1.300"/></svg>
    <svg viewBox="0 0 18 20"><path d="M12 4H2v10h12v-4M5 17h7M8 14v3M13 2h4v5h-4zM15 7v8" fill="none" stroke="#0a0a0a" stroke-width="1.500"/></svg>
    <svg viewBox="0 -2 18 20"><use href="#spk" width="18" height="16"/></svg>
    <span class="ms-1">简体</span>
    <span style="padding-top:18px;margin-left:9px;width:9px;overflow:hidden;color:#2c2c30">20</span>
  </div>
</div>

<div class="seek position-absolute"><i></i></div>
<div class="ptime position-absolute">01:16</div>
<div class="player position-absolute d-flex align-items-center">
  <button class="bare" style="margin-left:24px" aria-label="随机播放"><svg width="14" height="14"><path d="M3 2v3q0 2 4 4 4-2 4-4V2M7 9q0 3-4 3M9 10q1 2 3 2" fill="none" stroke="currentColor" stroke-width="1.800"/><path d="M0 4l3-4 3 4zM8 4l3-4 3 4z" fill="currentColor"/></svg></button>
  <button class="bare" style="margin-left:17px" aria-label="重复"><svg width="14" height="14"><path d="M4 3a5.300 5.300 0 1 0 6 0" fill="none" stroke="currentColor" stroke-width="1.800"/><path d="M3 0l4 2.500L4 6z" fill="currentColor"/></svg></button>
  <i class="recsep" style="height:20px;margin:0 14px 0 16px"></i>
  <button class="bare" aria-label="停止"><svg width="13" height="12"><path d="M0 0h13v12H0z" fill="currentColor"/></svg></button>
  <button class="bare skip rew" aria-label="快退"><svg width="22" height="12"><path d="M11 0v12L0 6zM22 0v12L11 6z" fill="currentColor"/></svg></button>
  <button class="bare play" aria-label="暂停"><svg width="14" height="20"><path d="M1 0h4v20H1zM9 0h4v20H9z" fill="currentColor"/></svg></button>
  <button class="bare skip fwd" aria-label="快进"><svg width="22" height="12"><path d="M0 0l11 6L0 12zM11 0l11 6-11 6z" fill="currentColor"/></svg></button>
  <button class="bare" style="margin-left:17px" aria-label="静音"><svg width="15" height="13"><path d="M0 4h3l4-4v13L3 9H0z" fill="currentColor"/><path d="M9 4q2 2.500 0 5M11 2q4 4.500 0 9" fill="none" stroke="currentColor" stroke-width="1.300"/></svg></button>
  <input type="range" class="vol" value="50" aria-label="音量">
</div>

<script>
const tails = "e292a8ef0690307ce48763";
document.getElementById("accs").innerHTML = [...tails].map((c, i) =>
  `<tr><td>${i + 1}</td><td>SESSDATA=${c}...</td><td></td><td></td><td></td></tr>`).join("");
</script>
<script src="https://cdn.jsdelivr.net/npm/bootstrap@5.3.0/dist/js/bootstrap.bundle.min.js"></script>
</body>
</html>
